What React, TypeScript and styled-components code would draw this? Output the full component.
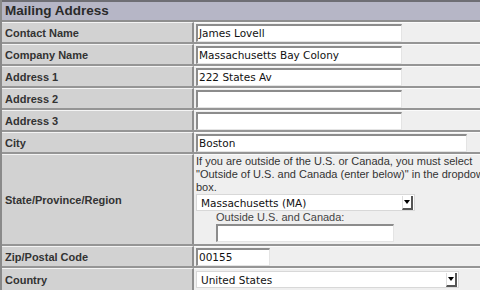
import React from "react";
import styled, { createGlobalStyle } from "styled-components";

const Global = createGlobalStyle`
  html, body { margin: 0; padding: 0; background: #efefef; }
  body { font-family: "Liberation Sans", Arial, sans-serif; }
`;

const Table = styled.div`
  width: 480px;
  height: 290px;
  overflow: hidden;
  border-left: 2px solid #8a8a8a;
  box-sizing: border-box;
  background: #efefef;
`;

const Header = styled.div`
  height: 18px;
  border-top: 2px solid #6e6e74;
  background: #b6b6c6;
  color: #2a2a2a;
  font-weight: bold;
  font-size: 13.5px;
  line-height: 18px;
  padding-left: 3px;
  border-bottom: 2px solid #8e8e8e;
`;

const Row = styled.div<{ $h: number }>`
  display: grid;
  grid-template-columns: 192px 1fr;
  height: ${(p) => p.$h}px;
  border-bottom: 2px solid #959595;
  box-sizing: content-box;
`;

const Label = styled.div`
  background: #d2d2d2;
  border-right: 2px solid #8e8e8e;
  border-top: 1px solid #f4f4f4;
  display: flex;
  align-items: center;
  padding-left: 3px;
  font-weight: bold;
  font-size: 11px;
  color: #333;
`;

const Cell = styled.div`
  background: #efefef;
  border-top: 1px solid #fbfbfb;
  padding-left: 2px;
  display: flex;
  flex-direction: column;
  justify-content: center;
`;

const Input = styled.div<{ $w: number }>`
  width: ${(p) => p.$w}px;
  height: 18px;
  box-sizing: border-box;
  background: #fff;
  border-top: 2px solid #8c8c8c;
  border-left: 2px solid #8c8c8c;
  border-right: 1px solid #e4e4e4;
  border-bottom: 1px solid #e4e4e4;
  font-family: "DejaVu Sans", sans-serif;
  font-size: 10.5px;
  color: #111;
  line-height: 15px;
  padding-left: 1px;
  white-space: nowrap;
`;

const Select = styled.div<{ $w: number }>`
  width: ${(p) => p.$w}px;
  height: 17px;
  box-sizing: border-box;
  background: #fff;
  border: 1px solid #d8d8d8;
  display: flex;
  align-items: center;
  justify-content: space-between;
  font-family: "DejaVu Sans", sans-serif;
  font-size: 10.5px;
  color: #111;
  padding-left: 4px;
`;

const SelectBtn = styled.div`
  width: 11px;
  height: 14px;
  box-sizing: border-box;
  border-right: 2px solid #555;
  border-bottom: 2px solid #555;
  border-left: 1px solid #ddd;
  margin-right: 1px;
  display: flex;
  align-items: center;
  justify-content: center;
  &::after {
    content: "";
    border-left: 3px solid transparent;
    border-right: 3px solid transparent;
    border-top: 4px solid #000;
  }
`;

const Help = styled.div`
  font-size: 11px;
  line-height: 13px;
  color: #333;
  white-space: nowrap;
`;

const Indent = styled.div`
  padding-left: 20px;
  margin-top: 0px;
`;

const SubLabel = styled.div`
  font-size: 11px;
  color: #444;
  line-height: 13px;
`;

const StateCell = styled(Cell)`
  justify-content: flex-start;
  padding-top: 0;
  & > ${Select} {
    margin-top: 0;
  }
`;

const Sel = ({ w, v }: { w: number; v: string }) => (
  <Select $w={w}>
    <span>{v}</span>
    <SelectBtn />
  </Select>
);

export default function App() {
  return (
    <>
      <Global />
      <Table>
        <Header>Mailing Address</Header>
        <Row $h={20}>
          <Label>Contact Name</Label>
          <Cell><Input $w={206}>James Lovell</Input></Cell>
        </Row>
        <Row $h={20}>
          <Label>Company Name</Label>
          <Cell><Input $w={206}>Massachusetts Bay Colony</Input></Cell>
        </Row>
        <Row $h={20}>
          <Label>Address 1</Label>
          <Cell><Input $w={206}>222 States Av</Input></Cell>
        </Row>
        <Row $h={20}>
          <Label>Address 2</Label>
          <Cell><Input $w={206} /></Cell>
        </Row>
        <Row $h={20}>
          <Label>Address 3</Label>
          <Cell><Input $w={206} /></Cell>
        </Row>
        <Row $h={20}>
          <Label>City</Label>
          <Cell><Input $w={271}>Boston</Input></Cell>
        </Row>
        <Row $h={90}>
          <Label>State/Province/Region</Label>
          <StateCell>
            <Help>
              If you are outside of the U.S. or Canada, you must select<br />
              "Outside of U.S. and Canada (enter below)" in the dropdown<br />
              box.
            </Help>
            <Sel w={219} v="Massachusetts (MA)" />
            <Indent>
              <SubLabel>Outside U.S. and Canada:</SubLabel>
              <Input $w={178} />
            </Indent>
          </StateCell>
        </Row>
        <Row $h={20}>
          <Label>Zip/Postal Code</Label>
          <Cell><Input $w={74}>00155</Input></Cell>
        </Row>
        <Row $h={22}>
          <Label>Country</Label>
          <Cell><Sel w={263} v="United States" /></Cell>
        </Row>
      </Table>
    </>
  );
}
